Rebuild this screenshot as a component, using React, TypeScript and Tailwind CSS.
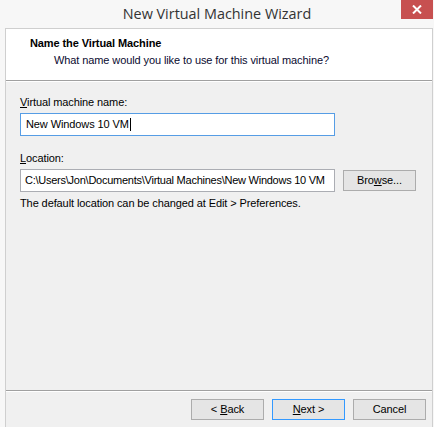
export default function App() {
  return (
    <div className="relative w-[434px] h-[427px] overflow-hidden bg-[#f7f7f7] font-['Liberation_Sans',Arial,sans-serif] text-[11px] tracking-[-0.1px] text-black flex flex-col">
      {/* title bar */}
      <div className="h-[28px] shrink-0 flex items-center justify-center pb-[1px]">
        <span className="font-['Open_Sans',sans-serif] text-[14.4px] tracking-normal text-[#333]">New Virtual Machine Wizard</span>
      </div>
      <button className="absolute top-0 right-[1px] w-[32px] h-[19px] bg-[#c75050] flex items-center justify-center text-white">
        <svg width="10" height="9" viewBox="0 0 10 9">
          <path d="M1 0.5 L9 8.5 M9 0.5 L1 8.5" stroke="white" strokeWidth="2" />
        </svg>
      </button>

      {/* client area */}
      <div className="flex-1 ml-[5px] mr-[1px] border-l border-t border-r border-[#cfcfcf] bg-[#f0f0f0] flex flex-col">
        <div className="h-[52px] bg-white border-b border-[#a0a0a0] pt-[8px] pl-[24px]">
          <div className="font-bold leading-[13px]">Name the Virtual Machine</div>
          <div className="leading-[13px] mt-[4px] pl-[24px] text-[#0a0a30]">What name would you like to use for this virtual machine?</div>
        </div>
        <div className="h-px bg-white" />

        <div className="flex-1 pl-[14px] pt-[14px]">
          <div className="leading-[13px]">
            <span className="underline">V</span>irtual machine name:
          </div>
          <div className="mt-[4px] w-[315px] h-[23px] bg-white border border-[#569de5] flex items-center pl-[5px]">
            New Windows 10 VM<span className="inline-block w-px h-[13px] bg-black ml-[1px]" />
          </div>

          <div className="leading-[13px] mt-[16px]">
            <span className="underline">L</span>ocation:
          </div>
          <div className="mt-[4px] flex items-center gap-[8px]">
            <div className="w-[315px] h-[23px] bg-white border border-[#abadb3] flex items-center pl-[4px] tracking-[-0.25px] whitespace-nowrap overflow-hidden">
              C:\Users\Jon\Documents\Virtual Machines\New Windows 10 VM
            </div>
            <button className="w-[73px] h-[21px] border border-[#acacac] bg-[#e5e5e5] flex items-center justify-center">
              Bro<span className="underline">w</span>se...
            </button>
          </div>
          <div className="leading-[13px] mt-[5px]">The default location can be changed at Edit &gt; Preferences.</div>
        </div>

        <div className="h-px bg-[#a0a0a0]" />
        <div className="h-px bg-white" />
        <div className="h-[35px] shrink-0 flex items-start justify-end gap-[8px] pt-[7px] pr-[6px]">
          <button className="w-[73px] h-[21px] border border-[#acacac] bg-[#e5e5e5] flex items-center justify-center">
            &lt; <span className="underline ml-[3px]">B</span>ack
          </button>
          <button className="w-[73px] h-[21px] border border-[#3399ff] bg-[#e5e5e5] flex items-center justify-center">
            <span className="underline">N</span>ext &gt;
          </button>
          <button className="w-[73px] h-[21px] border border-[#acacac] bg-[#e5e5e5] flex items-center justify-center">
            Cancel
          </button>
        </div>
      </div>
    </div>
  );
}
